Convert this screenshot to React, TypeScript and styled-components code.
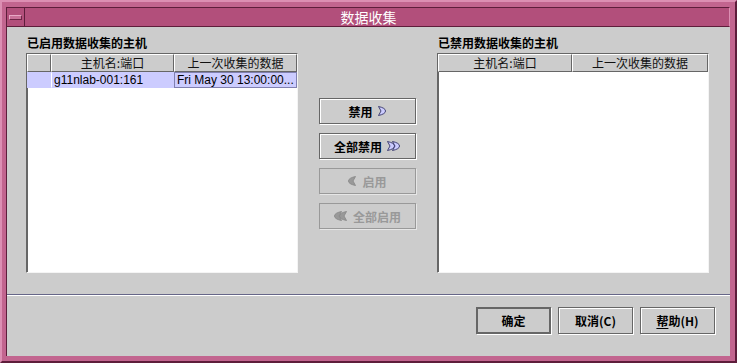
import React from "react"
import styled, {createGlobalStyle} from "styled-components"

const GlobalStyle = createGlobalStyle`
  html, body {
    margin: 0;
    padding: 0;
    background: #cccccc;
  }
  body {
    font-family: "Liberation Sans", "Noto Sans CJK SC", sans-serif;
    font-size: 12px;
    color: #000;
  }
`

const Window = styled.div`
  width: 737px;
  height: 363px;
  box-sizing: border-box;
  background: #c2658f;
  border-top: 2px solid #dc8fb3;
  border-left: 2px solid #dc8fb3;
  border-right: 2px solid #5e1d3b;
  border-bottom: 2px solid #5e1d3b;
  padding: 5px 5px 5px 4px;
  display: flex;
  flex-direction: column;
`

const TitleBar = styled.div`
  height: 18px;
  flex-shrink: 0;
  display: flex;
  align-items: stretch;
  background: #b24f7b;
  border-top: 1px solid #5e1d3b;
  border-left: 1px solid #5e1d3b;
  border-right: 1px solid #dc8fb3;
  border-bottom: 1px solid #5e1d3b;
`

const MenuButton = styled.div`
  width: 17px;
  display: flex;
  align-items: center;
  justify-content: center;
  border-right: 1px solid #5e1d3b;

  &::before {
    content: "";
    width: 11px;
    height: 3px;
    background: #c97098;
    border-top: 1px solid #e8a9c6;
    border-left: 1px solid #e8a9c6;
    border-bottom: 1px solid #6e2646;
    border-right: 1px solid #6e2646;
  }
`

const Title = styled.div`
  flex: 1;
  text-align: center;
  color: #ffffff;
  font-family: "Noto Sans CJK SC", sans-serif;
  font-size: 14px;
  line-height: 18px;
  padding-right: 17px;
`

const Content = styled.div`
  flex: 1;
  background: #cccccc;
  border-left: 1px solid #5e1d3b;
  display: flex;
  flex-direction: column;
`

const Main = styled.div`
  display: grid;
  grid-template-columns: 272px 97px 272px;
  column-gap: 21px;
  padding: 7px 19px 0 19px;
`

const Panel = styled.div`
  display: flex;
  flex-direction: column;
`

const PanelLabel = styled.div`
  font-family: "Noto Sans CJK SC", sans-serif;
  font-weight: bold;
  font-size: 12px;
  height: 19px;
  line-height: 17px;
  padding-left: 1px;
`

const TableBox = styled.div`
  height: 220px;
  box-sizing: border-box;
  background: #ffffff;
  border-top: 1px solid #666666;
  border-left: 1px solid #666666;
  border-right: 1px solid #f4f4f4;
  border-bottom: 1px solid #f4f4f4;
  box-shadow: 1px 1px 0 #666666 inset;
  padding: 0 1px 0 0;
`

const Row = styled.div<{ $cols: string; $selected?: boolean }>`
  display: grid;
  grid-template-columns: ${p => p.$cols};
  height: ${p => (p.$selected ? "16px" : "18px")};
  background: ${p => (p.$selected ? "#ccccff" : "#cccccc")};
`

const HeadCell = styled.div`
  box-sizing: border-box;
  border-top: 1px solid #ffffff;
  border-left: 1px solid #ffffff;
  border-right: 1px solid #666666;
  border-bottom: 1px solid #666666;
  text-align: center;
  font-family: "Noto Sans CJK SC", sans-serif;
  font-size: 12px;
  line-height: 15px;
  color: #111111;
  white-space: nowrap;
  overflow: hidden;
`

const DataCell = styled.div<{ $focus?: boolean; $first?: boolean }>`
  box-sizing: border-box;
  border: 1px solid ${p => (p.$focus ? "#8080b0" : "transparent")};
  border-left: ${p => (p.$first ? "none" : `1px solid ${p.$focus ? "#8080b0" : "#ffffff"}`)};
  padding-left: 2px;
  font-family: "Liberation Sans", sans-serif;
  font-size: 12px;
  line-height: 14px;
  white-space: nowrap;
  overflow: hidden;
  color: #000000;
`

const Middle = styled.div`
  display: flex;
  flex-direction: column;
  gap: 9px;
  padding-top: 64px;
`

const Button = styled.button<{ $w?: number; $h?: number; $default?: boolean }>`
  width: ${p => (p.$w ? `${p.$w}px` : "100%")};
  height: ${p => (p.$h ? `${p.$h}px` : "26px")};
  box-sizing: border-box;
  background: #cccccc;
  border: ${p => (p.$default ? "2px solid #666666" : "1px solid #666666")};
  box-shadow: ${p => (p.$default ? "1px 1px 0 #ffffff" : "1px 1px 0 #ffffff, inset 1px 1px 0 #ffffff")};
  display: flex;
  align-items: center;
  justify-content: center;
  gap: 5px;
  padding: 0;
  font-family: "Noto Sans CJK SC", sans-serif;
  font-weight: bold;
  font-size: 12px;
  color: #000000;

  &:disabled {
    color: #999999;
    border-color: #999999;
    box-shadow: 1px 1px 0 #e6e6e6;
  }
`

const Mnemonic = styled.span`
  text-decoration: underline;
  text-underline-offset: 2px;
`

const Separator = styled.div`
  margin-top: 21px;
  height: 1px;
  background: #666688;
  border-bottom: 1px solid #ffffff;
`

const Footer = styled.div`
  display: flex;
  justify-content: flex-end;
  gap: 7px;
  padding: 11px 15px 0 0;
`

function Arrow({ dir, double, disabled }: { dir: "right" | "left"; double?: boolean; disabled?: boolean }) {
  const fill = disabled ? "#999999" : "#ccccff"
  const stroke = disabled ? "#8a8a8a" : "#333366"
  const one = (x: number) =>
    dir === "right"
      ? `M${x} 1.5 Q${x + 7} 3 ${x + 7} 6 Q${x + 7} 9 ${x} 10.5 L${x + 2.5} 6 Z`
      : `M${x + 7} 1.5 Q${x} 3 ${x} 6 Q${x} 9 ${x + 7} 10.5 L${x + 4.5} 6 Z`
  const w = double ? 14 : 9
  return (
    <svg width={w} height="12" viewBox={`0 0 ${w} 12`}>
      {double && <path d={one(dir === "right" ? 0.5 : 5.5)} fill={fill} stroke={stroke} strokeWidth="0.9"/>}
      <path d={one(dir === "right" ? (double ? 5.5 : 0.5) : 0.5)} fill={fill} stroke={stroke} strokeWidth="0.9"/>
    </svg>
  )
}

export default function App() {
  return (
    <>
      <GlobalStyle/>
      <Window>
        <TitleBar>
          <MenuButton/>
          <Title>数据收集</Title>
        </TitleBar>
        <Content>
          <Main>
            <Panel>
              <PanelLabel>已启用数据收集的主机</PanelLabel>
              <TableBox>
                <Row $cols="24px 123px 123px">
                  <HeadCell/>
                  <HeadCell>主机名:端口</HeadCell>
                  <HeadCell>上一次收集的数据</HeadCell>
                </Row>
                <Row $cols="24px 123px 123px" $selected>
                  <DataCell $first/>
                  <DataCell>g11nlab-001:161</DataCell>
                  <DataCell $focus>Fri May 30 13:00:00...</DataCell>
                </Row>
              </TableBox>
            </Panel>

            <Middle>
              <Button>禁用 <Arrow dir="right"/></Button>
              <Button>全部禁用 <Arrow dir="right" double/></Button>
              <Button disabled><Arrow dir="left" disabled/> 启用</Button>
              <Button disabled><Arrow dir="left" double disabled/> 全部启用</Button>
            </Middle>

            <Panel>
              <PanelLabel>已禁用数据收集的主机</PanelLabel>
              <TableBox>
                <Row $cols="134px 136px">
                  <HeadCell>主机名:端口</HeadCell>
                  <HeadCell>上一次收集的数据</HeadCell>
                </Row>
              </TableBox>
            </Panel>
          </Main>

          <Separator/>

          <Footer>
            <Button $w={75} $h={27} $default>确定</Button>
            <Button $w={75} $h={27}>取消(C)</Button>
            <Button $w={75} $h={27}><span><Mnemonic>帮</Mnemonic>助(H)</span></Button>
          </Footer>
        </Content>
      </Window>
    </>
  )
}
